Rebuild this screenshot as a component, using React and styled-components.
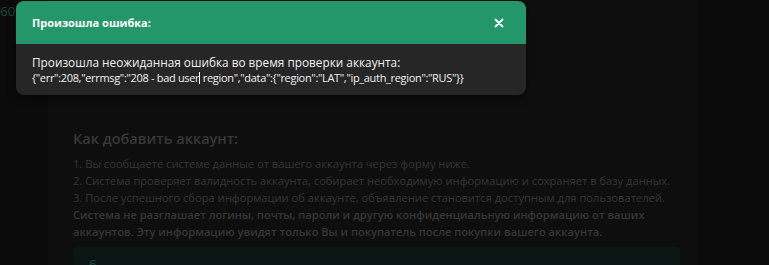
import React from "react";
import styled, { createGlobalStyle } from "styled-components";

const GlobalStyle = createGlobalStyle`
    html, body {
        margin: 0;
        padding: 0;
        background: #0b0b0b;
        font-family: "Open Sans", "Liberation Sans", sans-serif;
    }
`;

function App() {
    return (
        <Page>
            <GlobalStyle />
            <Price>,60</Price>
            <Card>
                <Heading>Как добавить аккаунт:</Heading>
                <Steps>
                    <li>1. Вы сообщаете системе данные от вашего аккаунта через форму ниже.</li>
                    <li>2. Система проверяет валидность аккаунта, собирает необходимую информацию и сохраняет в базу данных.</li>
                    <li>3. После успешного сбора информации об аккаунте, объявление становится доступным для пользователей.</li>
                </Steps>
                <Notice>
                    Система не разглашает логины, почты, пароли и другую конфиденциальную информацию от ваших
                    <br />
                    аккаунтов. Эту информацию увидят только Вы и покупатель после покупки вашего аккаунта.
                </Notice>
                <FormBox>
                    <span>б</span>
                </FormBox>
            </Card>
            <Toast>
                <ToastHeader>
                    <h3>Произошла ошибка:</h3>
                    <Close aria-label="close">
                        <svg width="10" height="10" viewBox="0 0 10 10">
                            <path d="M1.5 1.5 L8.5 8.5 M8.5 1.5 L1.5 8.5" stroke="#fff" strokeWidth="1.8" strokeLinecap="round" />
                        </svg>
                    </Close>
                </ToastHeader>
                <ToastBody>
                    <Message>Произошла неожиданная ошибка во время проверки аккаунта:</Message>
                    <Details>
                        {'{"err":208,"errmsg":"208 - bad user'}
                        <Caret />
                        {' region","data":{"region":"LAT","ip_auth_region":"RUS"}}'}
                    </Details>
                </ToastBody>
            </Toast>
        </Page>
    );
}

const Page = styled.div`
    position: relative;
    width: 769px;
    height: 265px;
    overflow: hidden;
    background: #0b0b0b;
`;

const Price = styled.div`
    position: absolute;
    left: -3px;
    top: 2px;
    font-size: 13px;
    color: #1c4a38;
`;

const Card = styled.div`
    margin-left: 48px;
    width: 649px;
    height: 265px;
    background: #0e0e0e;
    padding: 129px 0 0 25px;
    box-sizing: border-box;
`;

const Heading = styled.h2`
    margin: 0 0 6px;
    font-size: 14.5px;
    line-height: 20px;
    font-weight: 600;
    color: #383838;
`;

const Steps = styled.ul`
    margin: 0;
    padding: 0;
    list-style: none;
    li {
        font-size: 11.15px;
        line-height: 17px;
        color: #363636;
        white-space: nowrap;
    }
`;

const Notice = styled.p`
    margin: 0;
    font-size: 11.1px;
    line-height: 17px;
    font-weight: 600;
    color: #363636;
    white-space: nowrap;
`;

const FormBox = styled.div`
    margin-top: 7px;
    width: 607px;
    height: 40px;
    background: #0b1614;
    border-radius: 4px;
    padding: 6px 0 0 16px;
    box-sizing: border-box;
    span {
        font-size: 13px;
        color: #15503a;
    }
`;

const Toast = styled.div`
    position: absolute;
    left: 16px;
    top: 1px;
    width: 510px;
    border-radius: 8px;
    overflow: hidden;
    background: #262626;
    box-shadow: 0 2px 8px rgba(0, 0, 0, 0.5);
`;

const ToastHeader = styled.div`
    display: flex;
    align-items: center;
    justify-content: space-between;
    height: 43px;
    padding: 0 22px 0 16px;
    background: #23976a;
    h3 {
        margin: 0;
        font-size: 11px;
        font-weight: 700;
        color: #ffffff;
    }
`;

const Close = styled.button`
    display: flex;
    padding: 0;
    border: none;
    background: none;
    cursor: pointer;
`;

const ToastBody = styled.div`
    padding: 11px 16px 0;
    height: 51px;
    box-sizing: border-box;
    color: #f0f0f0;
    white-space: nowrap;
`;

const Message = styled.div`
    font-size: 11.8px;
    line-height: 15px;
`;

const Details = styled.div`
    font-size: 11px;
    line-height: 15px;
    letter-spacing: -0.32px;
`;

const Caret = styled.span`
    display: inline-block;
    width: 1px;
    height: 12px;
    background: #ffffff;
    vertical-align: -2px;
`;

export default App;
